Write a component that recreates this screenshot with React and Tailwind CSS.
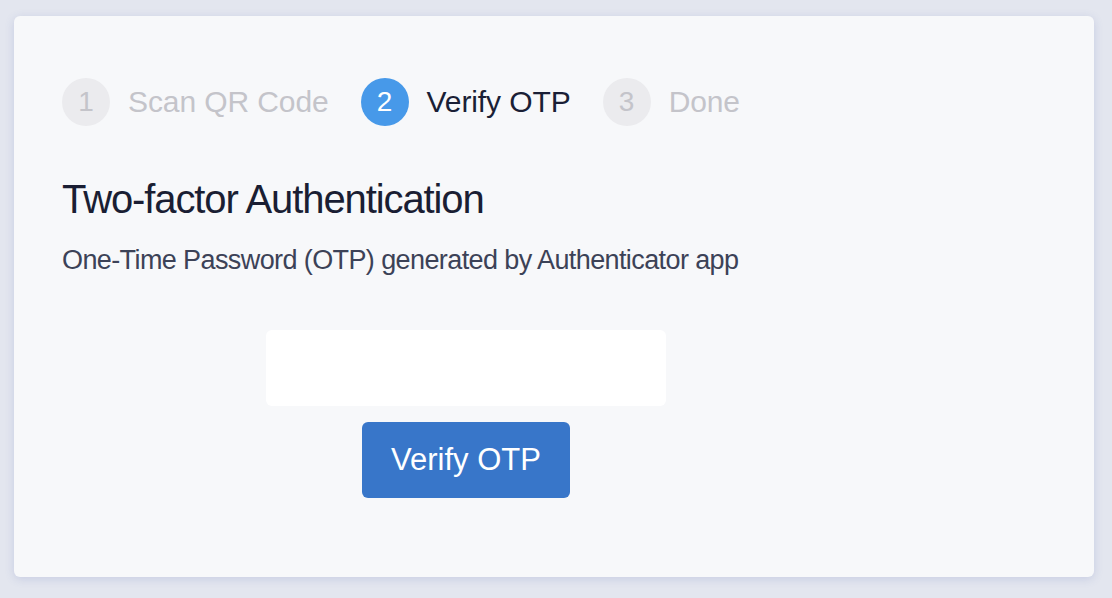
import React from "react";

const steps = [
  { n: 1, label: "Scan QR Code", active: false },
  { n: 2, label: "Verify OTP", active: true },
  { n: 3, label: "Done", active: false },
];

function Step({ n, label, active }) {
  return (
    <div className="flex items-center">
      <div
        className={
          active
            ? "flex h-12 w-12 items-center justify-center rounded-full bg-[#4799e9] text-[28px] text-white"
            : "flex h-12 w-12 items-center justify-center rounded-full bg-[#ebebee] text-[28px] text-[#c4c4ca]"
        }
      >
        {n}
      </div>
      <span
        className={
          active
            ? "ml-[18px] text-[30px] leading-none tracking-[-0.1px] text-[#1a1f36]"
            : "ml-[18px] text-[30px] leading-none tracking-[-0.1px] text-[#c4c4ca]"
        }
      >
        {label}
      </span>
    </div>
  );
}

export default function App() {
  return (
    <div
      className="min-h-screen bg-[#e3e6ef] pt-4 pl-[14px]"
      style={{ fontFamily: "'Liberation Sans', Arial, sans-serif" }}
    >
      <div className="h-[561px] w-[1080px] rounded-md bg-[#f7f8fa] px-12 pt-[62px] shadow-[0_2px_10px_rgba(70,90,170,0.18)]">
        <div className="flex items-center gap-8">
          {steps.map((s) => (
            <Step key={s.n} {...s} />
          ))}
        </div>

        <h1 className="mt-[49px] text-[40px] leading-[48px] tracking-[-1.1px] text-[#1a1e33]">
          Two-factor Authentication
        </h1>
        <p className="mt-[21px] text-[27px] leading-[32px] tracking-[-0.6px] text-[#3c4257]">
          One-Time Password (OTP) generated by Authenticator app
        </p>

        <div className="mt-[54px] flex w-[808px] flex-col items-center gap-4">
          <input
            type="text"
            className="h-[76px] w-[400px] rounded-md bg-white px-4 text-[28px] outline-none"
          />
          <button className="h-[76px] w-[208px] rounded-md bg-[#3876c9] text-[31px] text-white">
            Verify OTP
          </button>
        </div>
      </div>
    </div>
  );
}
